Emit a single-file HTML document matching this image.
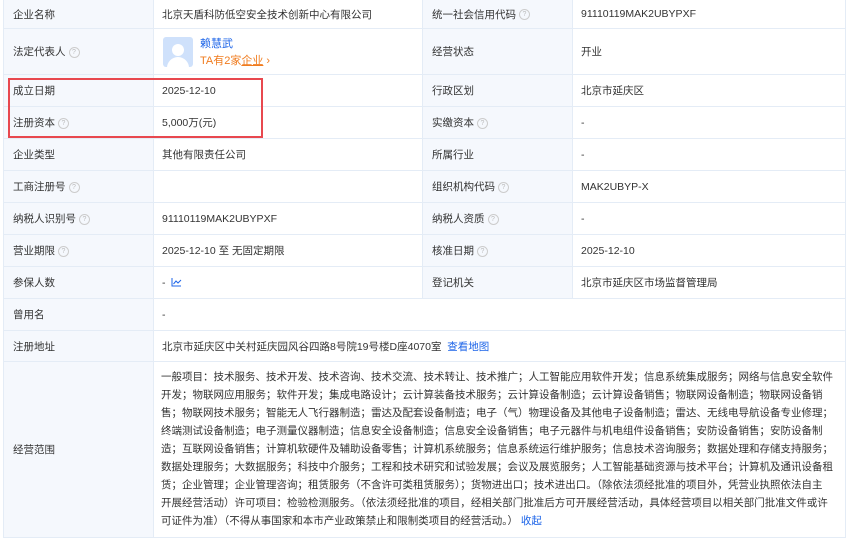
<!DOCTYPE html>
<html><head><meta charset="utf-8"><style>
body{margin:0;width:847px;height:535px;overflow:hidden;background:#fff;font-family:"Liberation Sans","Noto Sans CJK SC",sans-serif;font-size:10.5px;color:#333;}
table{position:absolute;left:3px;top:-1px;border-collapse:collapse;table-layout:fixed;width:843px;}
td{border:1px solid #e4ecf6;padding:0 0 0 8px;vertical-align:middle;white-space:nowrap;}
td.l{background:#f5f8fd;padding-left:9px;}
.q{display:inline-block;width:9px;height:9px;border:1px solid #ccc;border-radius:50%;color:#bbb;font-size:7px;line-height:9px;text-align:center;margin-left:3px;vertical-align:middle;}
a{color:#1c64e8;text-decoration:none;}
.scope{white-space:normal;line-height:18px;padding:6px 6px 0 7px;font-size:10.5px;vertical-align:top;}
.scope div{white-space:nowrap;}
.red{position:absolute;left:8px;top:78px;width:255px;height:60px;border:2px solid #e8484f;box-sizing:border-box;}
</style></head><body>
<table>
<colgroup><col style="width:150px"><col style="width:269px"><col style="width:150px"><col></colgroup>
<tr style="height:29px"><td class="l">企业名称</td><td>北京天盾科防低空安全技术创新中心有限公司</td><td class="l">统一社会信用代码<span class="q">?</span></td><td>91110119MAK2UBYPXF</td></tr>
<tr style="height:46px"><td class="l">法定代表人<span class="q">?</span></td><td><div style="position:relative;height:30px"><div style="position:absolute;left:1px;top:0;width:30px;height:30px;background:#cfe1fb;border-radius:3px;overflow:hidden"><div style="position:absolute;left:9px;top:7px;width:12px;height:12px;border-radius:50%;background:#fff"></div><div style="position:absolute;left:4px;top:20px;width:22px;height:14px;border-radius:11px 11px 0 0;background:#fff"></div></div><div style="position:absolute;left:38px;top:-2px;color:#1c64e8;font-size:11px">赖慧武</div><div style="position:absolute;left:38px;top:15px;color:#f07c1f;font-size:11px">TA有2家<u>企业</u> ›</div></div></td><td class="l">经营状态</td><td>开业</td></tr>
<tr style="height:32px"><td class="l">成立日期</td><td>2025-12-10</td><td class="l">行政区划</td><td>北京市延庆区</td></tr>
<tr style="height:32px"><td class="l">注册资本<span class="q">?</span></td><td>5,000万(元)</td><td class="l">实缴资本<span class="q">?</span></td><td>-</td></tr>
<tr style="height:32px"><td class="l">企业类型</td><td>其他有限责任公司</td><td class="l">所属行业</td><td>-</td></tr>
<tr style="height:32px"><td class="l">工商注册号<span class="q">?</span></td><td></td><td class="l">组织机构代码<span class="q">?</span></td><td>MAK2UBYP-X</td></tr>
<tr style="height:32px"><td class="l">纳税人识别号<span class="q">?</span></td><td>91110119MAK2UBYPXF</td><td class="l">纳税人资质<span class="q">?</span></td><td>-</td></tr>
<tr style="height:32px"><td class="l">营业期限<span class="q">?</span></td><td>2025-12-10 至 无固定期限</td><td class="l">核准日期<span class="q">?</span></td><td>2025-12-10</td></tr>
<tr style="height:32px"><td class="l">参保人数</td><td>- &nbsp;<svg width="11" height="9" viewBox="0 0 11 9" style="vertical-align:middle"><path d="M1 0V8H10M2.5 6L5 3L7 5L10 2" fill="none" stroke="#1c64e8" stroke-width="1"/></svg></td><td class="l">登记机关</td><td>北京市延庆区市场监督管理局</td></tr>
<tr style="height:32px"><td class="l">曾用名</td><td colspan="3">-</td></tr>
<tr style="height:31px"><td class="l">注册地址</td><td colspan="3">北京市延庆区中关村延庆园风谷四路8号院19号楼D座4070室 &nbsp;<a>查看地图</a></td></tr>
<tr style="height:176px"><td class="l">经营范围</td><td colspan="3" class="scope">
<div>一般项目：技术服务、技术开发、技术咨询、技术交流、技术转让、技术推广；人工智能应用软件开发；信息系统集成服务；网络与信息安全软件</div>
<div>开发；物联网应用服务；软件开发；集成电路设计；云计算装备技术服务；云计算设备制造；云计算设备销售；物联网设备制造；物联网设备销</div>
<div>售；物联网技术服务；智能无人飞行器制造；雷达及配套设备制造；电子（气）物理设备及其他电子设备制造；雷达、无线电导航设备专业修理；</div>
<div>终端测试设备制造；电子测量仪器制造；信息安全设备制造；信息安全设备销售；电子元器件与机电组件设备销售；安防设备销售；安防设备制</div>
<div>造；互联网设备销售；计算机软硬件及辅助设备零售；计算机系统服务；信息系统运行维护服务；信息技术咨询服务；数据处理和存储支持服务；</div>
<div>数据处理服务；大数据服务；科技中介服务；工程和技术研究和试验发展；会议及展览服务；人工智能基础资源与技术平台；计算机及通讯设备租</div>
<div>赁；企业管理；企业管理咨询；租赁服务（不含许可类租赁服务）；货物进出口；技术进出口。（除依法须经批准的项目外，凭营业执照依法自主</div>
<div>开展经营活动）许可项目：检验检测服务。（依法须经批准的项目，经相关部门批准后方可开展经营活动，具体经营项目以相关部门批准文件或许</div>
<div>可证件为准）（不得从事国家和本市产业政策禁止和限制类项目的经营活动。） <a>收起</a></div>
</td></tr>
</table>
<div class="red"></div>
</body></html>
